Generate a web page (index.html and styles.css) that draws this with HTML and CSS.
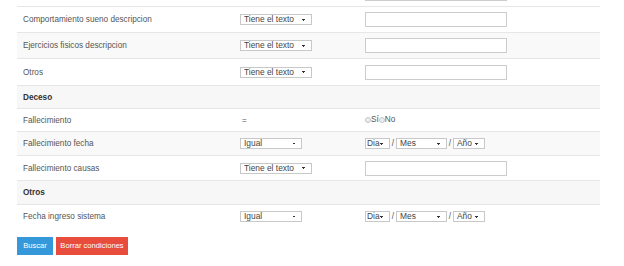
FILE: index.html
```html
<!DOCTYPE html>
<html lang="es">
<head>
  <meta charset="UTF-8" />
  <meta name="viewport" content="width=device-width, initial-scale=1.0"/>
  <title>Busqueda avanzada</title>
  <link rel="stylesheet" href="styles.css">
</head>
<body>

  <table class="filtros">
    <colgroup>
      <col class="c-campo">
      <col class="c-op">
      <col class="c-valor">
    </colgroup>
    <tr class="corte">
      <td></td>
      <td></td>
      <td><input type="text" class="txt"></td>
    </tr>
    <tr>
      <td>Comportamiento sueno descripcion</td>
      <td><select class="sel sel-texto"><option>Tiene el texto</option></select></td>
      <td><input type="text" class="txt"></td>
    </tr>
    <tr class="gris">
      <td>Ejercicios fisicos descripcion</td>
      <td><select class="sel sel-texto"><option>Tiene el texto</option></select></td>
      <td><input type="text" class="txt"></td>
    </tr>
    <tr class="alta">
      <td>Otros</td>
      <td><select class="sel sel-texto"><option>Tiene el texto</option></select></td>
      <td><input type="text" class="txt"></td>
    </tr>
    <tr class="grupo">
      <td colspan="3">Deceso</td>
    </tr>
    <tr class="baja">
      <td>Fallecimiento</td>
      <td class="igual">=</td>
      <td class="radios">
        <input type="radio" name="fallecido" class="rad"><label>Sí</label><input type="radio" name="fallecido" class="rad"><label>No</label>
      </td>
    </tr>
    <tr class="gris media">
      <td>Fallecimiento fecha</td>
      <td><select class="sel sel-igual"><option>Igual</option></select></td>
      <td class="fecha">
        <select class="sel sel-dia"><option>Dia</option></select><span>/</span><select class="sel sel-mes"><option>Mes</option></select><span>/</span><select class="sel sel-anio"><option>Año</option></select>
      </td>
    </tr>
    <tr class="normal">
      <td>Fallecimiento causas</td>
      <td><select class="sel sel-texto"><option>Tiene el texto</option></select></td>
      <td><input type="text" class="txt"></td>
    </tr>
    <tr class="grupo media">
      <td colspan="3">Otros</td>
    </tr>
    <tr class="baja">
      <td>Fecha ingreso sistema</td>
      <td><select class="sel sel-igual"><option>Igual</option></select></td>
      <td class="fecha">
        <select class="sel sel-dia"><option>Dia</option></select><span>/</span><select class="sel sel-mes"><option>Mes</option></select><span>/</span><select class="sel sel-anio"><option>Año</option></select>
      </td>
    </tr>
  </table>

  <div class="acciones">
    <button class="btn btn-azul">Buscar</button>
    <button class="btn btn-rojo">Borrar condiciones</button>
  </div>

</body>
</html>
```

FILE: styles.css
```css
* {
  margin: 0; padding: 0; box-sizing: border-box;
  font-family: 'Liberation Sans', Arial, sans-serif;
}

body {
  background: #fff;
  color: #555;
  font-size: 8.2px;
  padding: 0 24px 0 17px;
}

.filtros {
  width: 583px;
  border-collapse: collapse;
  margin-top: -14px;
}

.c-campo { width: 217px; }
.c-op { width: 125px; }
.c-valor { width: 241px; }

.filtros td {
  padding: 0 6px;
  height: 26px;
  vertical-align: middle;
  border-top: 1px solid #e6e6e6;
}

.filtros tr.corte td {
  height: 20px;
  border-top: none;
  vertical-align: bottom;
}

.filtros tr.corte .txt { margin-bottom: 5px; }

.filtros tr.gris td { background: #f9f9f9; }

.filtros tr.grupo td {
  background: #f7f7f7;
  font-weight: bold;
  color: #333;
  height: 23px;
}

.filtros tr.alta td { height: 27px; }
.filtros tr.baja td { height: 23px; }
.filtros tr.media td { height: 24px; }
.filtros tr.normal td { height: 25px; }

.txt {
  display: block;
  width: 142px;
  height: 15px;
  border: 1px solid #ccc;
  background: #fff;
}

.sel {
  -webkit-appearance: none;
  appearance: none;
  height: 11px;
  font-size: 8.4px;
  color: #444;
  border: 1px solid #c8c8c8;
  border-radius: 0;
  padding: 0 0 0 3px;
  line-height: 9px;
  vertical-align: middle;
  background:
    linear-gradient(45deg, transparent 50%, #333 50%) calc(100% - 7px) 55% / 2px 2px no-repeat,
    linear-gradient(135deg, #333 50%, transparent 50%) calc(100% - 5px) 55% / 2px 2px no-repeat,
    #fff;
}

.sel-texto { width: 72px; }
.sel-igual { width: 62px; }
.sel-dia { width: 25px; padding-left: 1px; }
.sel-mes { width: 51px; }
.sel-anio { width: 32px; }

.fecha span {
  display: inline-block;
  width: 6px;
  text-align: center;
  vertical-align: middle;
}

.igual { padding-left: 8px !important; }

.radios label { vertical-align: middle; }

.rad {
  -webkit-appearance: none;
  appearance: none;
  width: 6px;
  height: 6px;
  border-radius: 50%;
  border: 1px solid #c4c4c4;
  background: #eee;
  vertical-align: middle;
}

.acciones {
  display: flex;
  gap: 3px;
  margin-top: 9px;
}

.btn {
  border: none;
  color: #fff;
  font-size: 7.6px;
  height: 18px;
  padding: 0;
  white-space: nowrap;
  cursor: pointer;
}

.btn-azul { background: #3498db; width: 36px; }
.btn-rojo { background: #e74c3c; width: 72px; }
```
